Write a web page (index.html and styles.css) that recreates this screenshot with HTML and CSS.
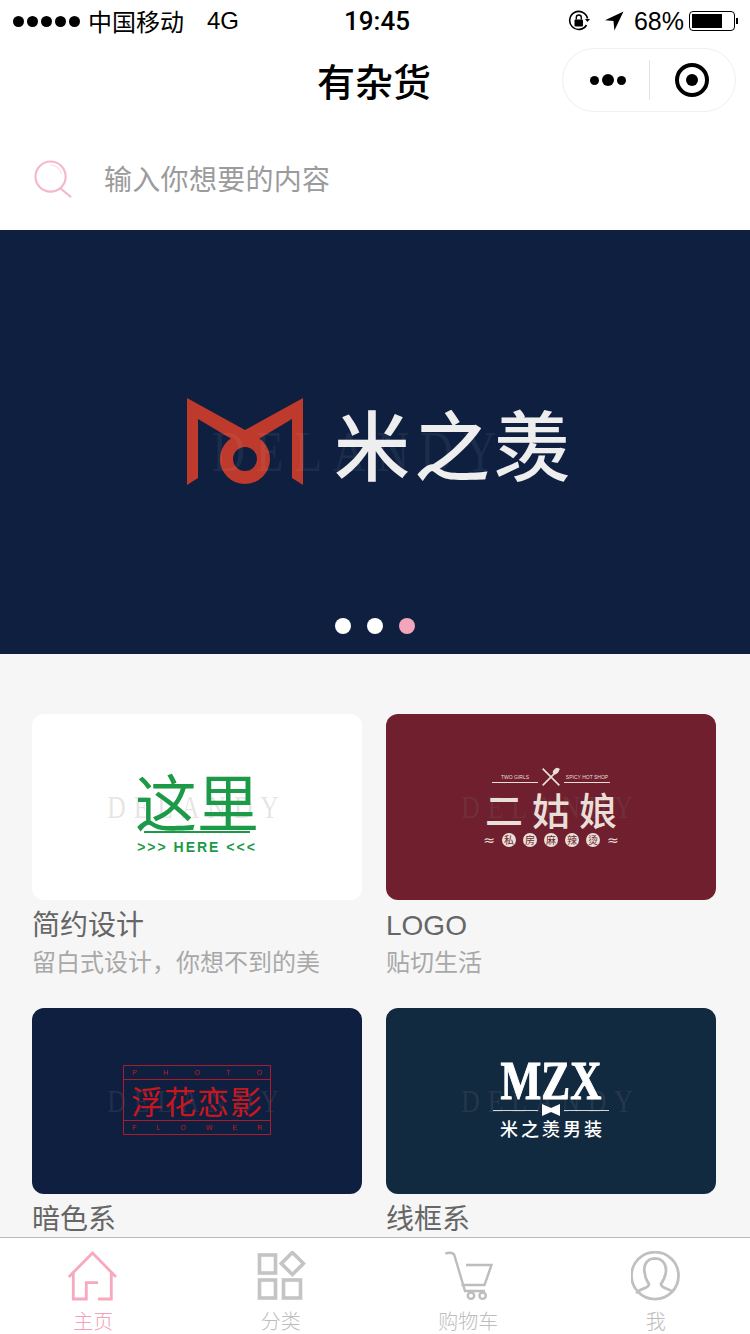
FILE: index.html
```html
<!DOCTYPE html>
<html lang="zh">
<head>
<meta charset="utf-8">
<title>有杂货</title>
<link rel="stylesheet" href="styles.css">
</head>
<body>
<div class="page">
  <div class="status">
    <div class="status-left">
      <div class="signal"><i></i><i></i><i></i><i></i><i></i></div>
      <span class="carrier">中国移动</span>
      <span class="net">4G</span>
    </div>
    <div class="time">19:45</div>
    <div class="status-right">
      <svg class="ic-lock" viewBox="0 0 22 22"><path d="M18.500 15A9 9 0 1 1 19.500 8.500" fill="none" stroke="#000" stroke-width="1.600"/><path d="M17 9h5l-2.500 3z" fill="#000"/><rect x="6.500" y="9.500" width="8.500" height="7" rx="1" fill="#000"/><path d="M8.300 9.500V7.500a2.500 2.500 0 0 1 5 0v2" fill="none" stroke="#000" stroke-width="1.400"/></svg>
      <svg class="ic-loc" viewBox="0 0 20 20"><path d="M19.500.5 1 9.300l8.500.8.900 9.300z" fill="#000"/></svg>
      <span class="pct">68%</span>
      <div class="battery"><div class="battery-fill"></div></div>
      <div class="battery-tip"></div>
    </div>
  </div>

  <div class="nav">
    <div class="nav-title">有杂货</div>
    <div class="capsule">
      <div class="capsule-dots"><i></i><b></b><i></i></div>
      <div class="capsule-line"></div>
      <div class="capsule-target"><i></i></div>
    </div>
  </div>

  <div class="search">
    <svg class="ic-search" viewBox="0 0 40 40"><circle cx="17" cy="17" r="15.500" fill="none" stroke="#f4b8c8" stroke-width="2.200"/><path d="M27 29l11 9" fill="none" stroke="#f4b8c8" stroke-width="2.200"/><path d="M17 5a12 12 0 0 1 11 9" fill="none" stroke="#fbe3e9" stroke-width="1.500"/></svg>
    <span class="search-text">输入你想要的内容</span>
  </div>

  <div class="banner">
    <div class="banner-logo">
      <svg class="m-mark" viewBox="0 0 118 90">
        <path d="M1 1 59 33 117 1V88L106 81V22L59 50 12 22V81L1 88Z" fill="#bd3a2c"/>
        <circle cx="59" cy="62" r="18.500" fill="none" stroke="#bd3a2c" stroke-width="13"/>
      </svg>
      <span class="banner-name">米之羡</span>
    </div>
    <div class="mark banner-mark">DELANDY</div>
    <div class="dots"><i></i><i></i><i class="on"></i></div>
  </div>

  <div class="main">
    <div class="grid">
      <div class="card">
        <div class="thumb thumb-white">
          <div class="here">
            <div class="here-cn">这里</div>
            <div class="here-line"></div>
            <div class="here-en">&gt;&gt;&gt; HERE &lt;&lt;&lt;</div>
          </div>
          <div class="mark">DELANDY</div>
        </div>
        <div class="card-title">简约设计</div>
        <div class="card-sub">留白式设计，你想不到的美</div>
      </div>
      <div class="card">
        <div class="thumb thumb-wine">
          <div class="girls">
            <div class="girls-top">
              <span class="girls-small">TWO GIRLS</span>
              <svg class="fork" viewBox="0 0 24 24"><path d="M2 2 22 22M22 2 2 22" stroke="#eadfd8" stroke-width="2" fill="none"/><ellipse cx="18" cy="5" rx="3" ry="4.500" transform="rotate(42 18 5)" fill="#eadfd8"/></svg>
              <span class="girls-small">SPICY HOT SHOP</span>
            </div>
            <div class="girls-name">二姑娘</div>
            <div class="girls-row">
              <span class="wave">≈</span>
              <span class="seal">私</span><span class="seal">房</span><span class="seal">麻</span><span class="seal">辣</span><span class="seal">烫</span>
              <span class="wave">≈</span>
            </div>
          </div>
          <div class="mark">DELANDY</div>
        </div>
        <div class="card-title">LOGO</div>
        <div class="card-sub">贴切生活</div>
      </div>
      <div class="card">
        <div class="thumb thumb-navy">
          <div class="photo">
            <div class="photo-row"><span>P</span><span>H</span><span>O</span><span>T</span><span>O</span></div>
            <div class="photo-name">浮花恋影</div>
            <div class="photo-row"><span>F</span><span>L</span><span>O</span><span>W</span><span>E</span><span>R</span></div>
          </div>
          <div class="mark">DELANDY</div>
        </div>
        <div class="card-title">暗色系</div>
      </div>
      <div class="card">
        <div class="thumb thumb-teal">
          <div class="mzx">
            <div class="mzx-en">MZX</div>
            <div class="mzx-rule">
              <i></i>
              <svg class="bow" viewBox="0 0 18 12"><path d="M0 0 9 4 18 0V12L9 8 0 12Z" fill="#fff"/></svg>
              <i></i>
            </div>
            <div class="mzx-cn">米之羡男装</div>
          </div>
          <div class="mark">DELANDY</div>
        </div>
        <div class="card-title">线框系</div>
      </div>
    </div>
  </div>

  <div class="tabbar">
    <div class="tab tab-on">
      <svg class="tab-ic" viewBox="0 0 50 50"><path d="M.8 26 24.500 2 48 26M5.300 21V48H18.300V31.700H30M43.300 21V48H30" fill="none" stroke="#f7a9be" stroke-width="2.800"/></svg>
      <span>主页</span>
    </div>
    <div class="tab">
      <svg class="tab-ic" viewBox="0 0 50 50"><g fill="none" stroke="#c4c4c4" stroke-width="3.600"><rect x="3.500" y="4" width="16" height="18"/><path d="M36.400 1.500 47.500 12.500 36.400 23.500 25.300 12.500Z"/><rect x="3.500" y="29" width="16" height="18"/><rect x="27.500" y="29" width="17" height="18"/></g></svg>
      <span>分类</span>
    </div>
    <div class="tab">
      <svg class="tab-ic" viewBox="0 0 50 50"><g fill="none" stroke="#bdbdbd" stroke-width="2.400"><path d="M2.300 2.500C6 1.500 10 1.500 11.300 4L22 40H42"/><path d="M23 14H48.500L41.500 34H18.500"/><circle cx="28" cy="44.700" r="3.200"/><circle cx="39.600" cy="44.700" r="3.200"/></g></svg>
      <span>购物车</span>
    </div>
    <div class="tab">
      <svg class="tab-ic" viewBox="0 0 50 50"><g fill="none" stroke="#c0c0c0" stroke-width="2.800"><circle cx="24" cy="24.700" r="23.500"/><path d="M5.500 42.500C8 37 18 38 18 33 16 30 14 26 14 23 12 17 14 7.500 24 7.300 34 7.500 36 17 34.500 23 34 26 32 30 30 33 30 38 39 37 42 41.500"/></g></svg>
      <span>我</span>
    </div>
  </div>
</div>
</body>
</html>
```
FILE: styles.css
```css
* { box-sizing: border-box; }
html, body { margin: 0; padding: 0; background: #fff; }
body { font-family: "Noto Sans CJK SC", "Liberation Sans", sans-serif; color: #000; }
.page { width: 750px; height: 1334px; display: flex; flex-direction: column; overflow: hidden; }

.status { height: 42px; flex: none; padding: 0 12px 0 13px; display: flex; align-items: center; justify-content: space-between; position: relative; }
.status-left { display: flex; align-items: center; }
.signal { display: flex; gap: 3px; margin-right: 9px; }
.signal i { width: 11px; height: 11px; border-radius: 50%; background: #000; }
.carrier { font-size: 24px; line-height: 30px; margin-left: -1px; margin-top: -1px; }
.net { font-family: "Liberation Sans", sans-serif; font-size: 24px; line-height: 30px; margin-left: 23px; }
.time { position: absolute; left: 344px; top: 6px; font-family: Roboto, "Liberation Sans", sans-serif; font-size: 26px; line-height: 30px; font-weight: 500; }
.status-right { display: flex; align-items: center; }
.ic-lock { width: 22px; height: 22px; margin-right: 14px; }
.ic-loc { width: 20px; height: 20px; margin-right: 10px; }
.pct { font-family: "Liberation Sans", sans-serif; font-size: 25px; line-height: 30px; margin-right: 5px; }
.battery { width: 46px; height: 20px; border: 1.500px solid #000; border-radius: 4px; padding: 2px; }
.battery-fill { width: 30px; height: 100%; background: #000; }
.battery-tip { width: 2px; height: 6px; background: #000; margin-left: 1px; }

.nav { height: 86px; flex: none; position: relative; display: flex; align-items: center; justify-content: center; }
.nav-title { font-size: 38px; font-weight: 500; line-height: 50px; margin-top: -10px; margin-left: -2px; }
.capsule { position: absolute; top: 6px; right: 14px; width: 174px; height: 64px; border: 1px solid #efefef; border-radius: 32px; display: flex; align-items: center; background: #fff; }
.capsule-dots { width: 86px; display: flex; align-items: center; justify-content: center; gap: 3px; padding-left: 4px; }
.capsule-dots i { width: 9px; height: 9px; border-radius: 50%; background: #000; }
.capsule-dots b { width: 12px; height: 12px; border-radius: 50%; background: #000; }
.capsule-line { width: 1px; height: 40px; background: #e2e2e2; }
.capsule-target { width: 34px; height: 34px; margin-left: 25px; border: 4px solid #000; border-radius: 50%; display: flex; align-items: center; justify-content: center; }
.capsule-target i { width: 12px; height: 12px; border-radius: 50%; background: #000; }

.search { height: 102px; flex: none; padding-left: 34px; display: flex; align-items: center; }
.ic-search { width: 39px; height: 39px; margin-right: 31px; }
.search-text { font-size: 28px; line-height: 40px; color: #9b9b9b; letter-spacing: .3px; margin-top: -2px; }

.banner { height: 424px; flex: none; background: #0e1f40; position: relative; display: flex; align-items: flex-start; justify-content: center; }
.banner-logo { margin-top: 167px; margin-left: 10px; display: flex; align-items: center; }
.m-mark { width: 118px; height: 90px; margin-right: 30px; }
.banner-name { font-size: 76px; line-height: 90px; font-weight: 500; color: #eeeeee; letter-spacing: 4px; white-space: nowrap; }
.mark { position: absolute; left: 0; right: 0; top: 50%; transform: translateY(-50%) scaleX(.8); text-align: center; font-family: "Liberation Serif", serif; font-size: 32px; letter-spacing: 10px; color: rgba(120, 120, 120, .2); white-space: nowrap; pointer-events: none; }
.banner-mark { top: 222px; left: -30px; font-size: 56px; letter-spacing: 14px; color: rgba(255, 255, 255, .06); }
.dots { position: absolute; left: 0; right: 0; top: 388px; display: flex; justify-content: center; gap: 16px; }
.dots i { width: 16px; height: 16px; border-radius: 50%; background: #fff; }
.dots i.on { background: #f2a5bb; }

.main { flex: 1; min-height: 0; background: #f6f6f6; overflow: hidden; padding: 60px 34px 0 32px; }
.grid { display: grid; grid-template-columns: 330px 330px; column-gap: 24px; row-gap: 28px; }
.thumb { height: 186px; border-radius: 12px; position: relative; overflow: hidden; display: flex; align-items: center; justify-content: center; }
.thumb-white { background: #fff; }
.thumb-wine { background: #6f1f2e; }
.thumb-navy { background: #0e1f40; }
.thumb-teal { background: #122a40; }
.card-title { font-family: "Liberation Sans", "Noto Sans CJK SC", sans-serif; font-size: 28px; line-height: 40px; color: #666; margin-top: 6px; margin-bottom: -2px; }
.card-sub { font-size: 24px; line-height: 36px; color: #a8a8a8; position: relative; top: -1px; }

.here { width: 124px; display: flex; flex-direction: column; align-items: center; position: relative; z-index: 1; top: 4px; color: #1c9a48; }
.here-cn { font-size: 62px; line-height: 66px; font-weight: 400; white-space: nowrap; }
.here-line { width: 106px; height: 2px; background: #1c9a48; margin-top: -2px; }
.here-en { font-family: "Liberation Sans", sans-serif; font-size: 14px; line-height: 18px; font-weight: 700; letter-spacing: 2px; margin-top: 5px; white-space: nowrap; }

.girls { width: 136px; display: flex; flex-direction: column; align-items: center; position: relative; z-index: 1; color: #eadfd8; }
.girls-top { display: flex; align-items: center; gap: 3px; white-space: nowrap; }
.girls-small { font-family: "Liberation Sans", sans-serif; font-size: 5px; line-height: 10px; width: 46px; text-align: center; border-bottom: 1px solid #eadfd8; }
.fork { width: 20px; height: 20px; flex: none; }
.girls-name { font-size: 38px; line-height: 44px; letter-spacing: 9px; white-space: nowrap; margin-left: 9px; font-weight: 500; }
.girls-row { display: flex; align-items: center; gap: 7px; margin-top: 2px; }
.seal { width: 14px; height: 14px; border-radius: 50%; background: #eadfd8; color: #6f1f2e; font-size: 10px; line-height: 14px; text-align: center; }
.wave { font-size: 14px; line-height: 14px; font-family: "DejaVu Sans", sans-serif; }

.photo { width: 148px; height: 70px; border: 1px solid #a81c2c; display: flex; flex-direction: column; justify-content: space-between; align-items: stretch; position: relative; z-index: 1; top: -1px; color: #c8161f; }
.photo-row { height: 14px; font-family: "Liberation Sans", sans-serif; font-size: 7px; line-height: 13px; display: flex; padding: 0 8px; justify-content: space-between; }
.photo-row:first-child { border-bottom: 1px solid #a81c2c; }
.photo-row:last-child { border-top: 1px solid #a81c2c; }
.photo-name { font-size: 32px; line-height: 40px; text-align: center; letter-spacing: 1px; white-space: nowrap; font-weight: 400; }

.mzx { width: 116px; display: flex; flex-direction: column; align-items: center; position: relative; z-index: 1; top: -1px; color: #fff; }
.mzx-en { font-family: "Liberation Serif", serif; font-weight: 700; font-size: 54px; line-height: 42px; white-space: nowrap; transform: scaleX(.8); -webkit-text-stroke: 1px #fff; }
.mzx-rule { display: flex; align-items: center; gap: 4px; width: 116px; margin-top: 2px; }
.mzx-rule i { flex: 1; height: 1px; background: #cfd6dd; }
.bow { width: 18px; height: 12px; flex: none; }
.mzx-cn { font-size: 18px; line-height: 24px; font-weight: 500; letter-spacing: 3px; white-space: nowrap; margin-left: 3px; }

.tabbar { height: 97px; flex: none; background: #fff; border-top: 1px solid #b9b9b9; display: grid; grid-template-columns: repeat(4, 1fr); position: relative; }
.tab { display: flex; flex-direction: column; align-items: center; padding-top: 13px; padding-right: 1px; font-size: 20px; line-height: 28px; color: #bdbdbd; font-weight: 300; }
.tab-on { color: #f3a0b6; }
.tab-ic { width: 50px; height: 50px; display: block; margin-bottom: 6px; }
```
